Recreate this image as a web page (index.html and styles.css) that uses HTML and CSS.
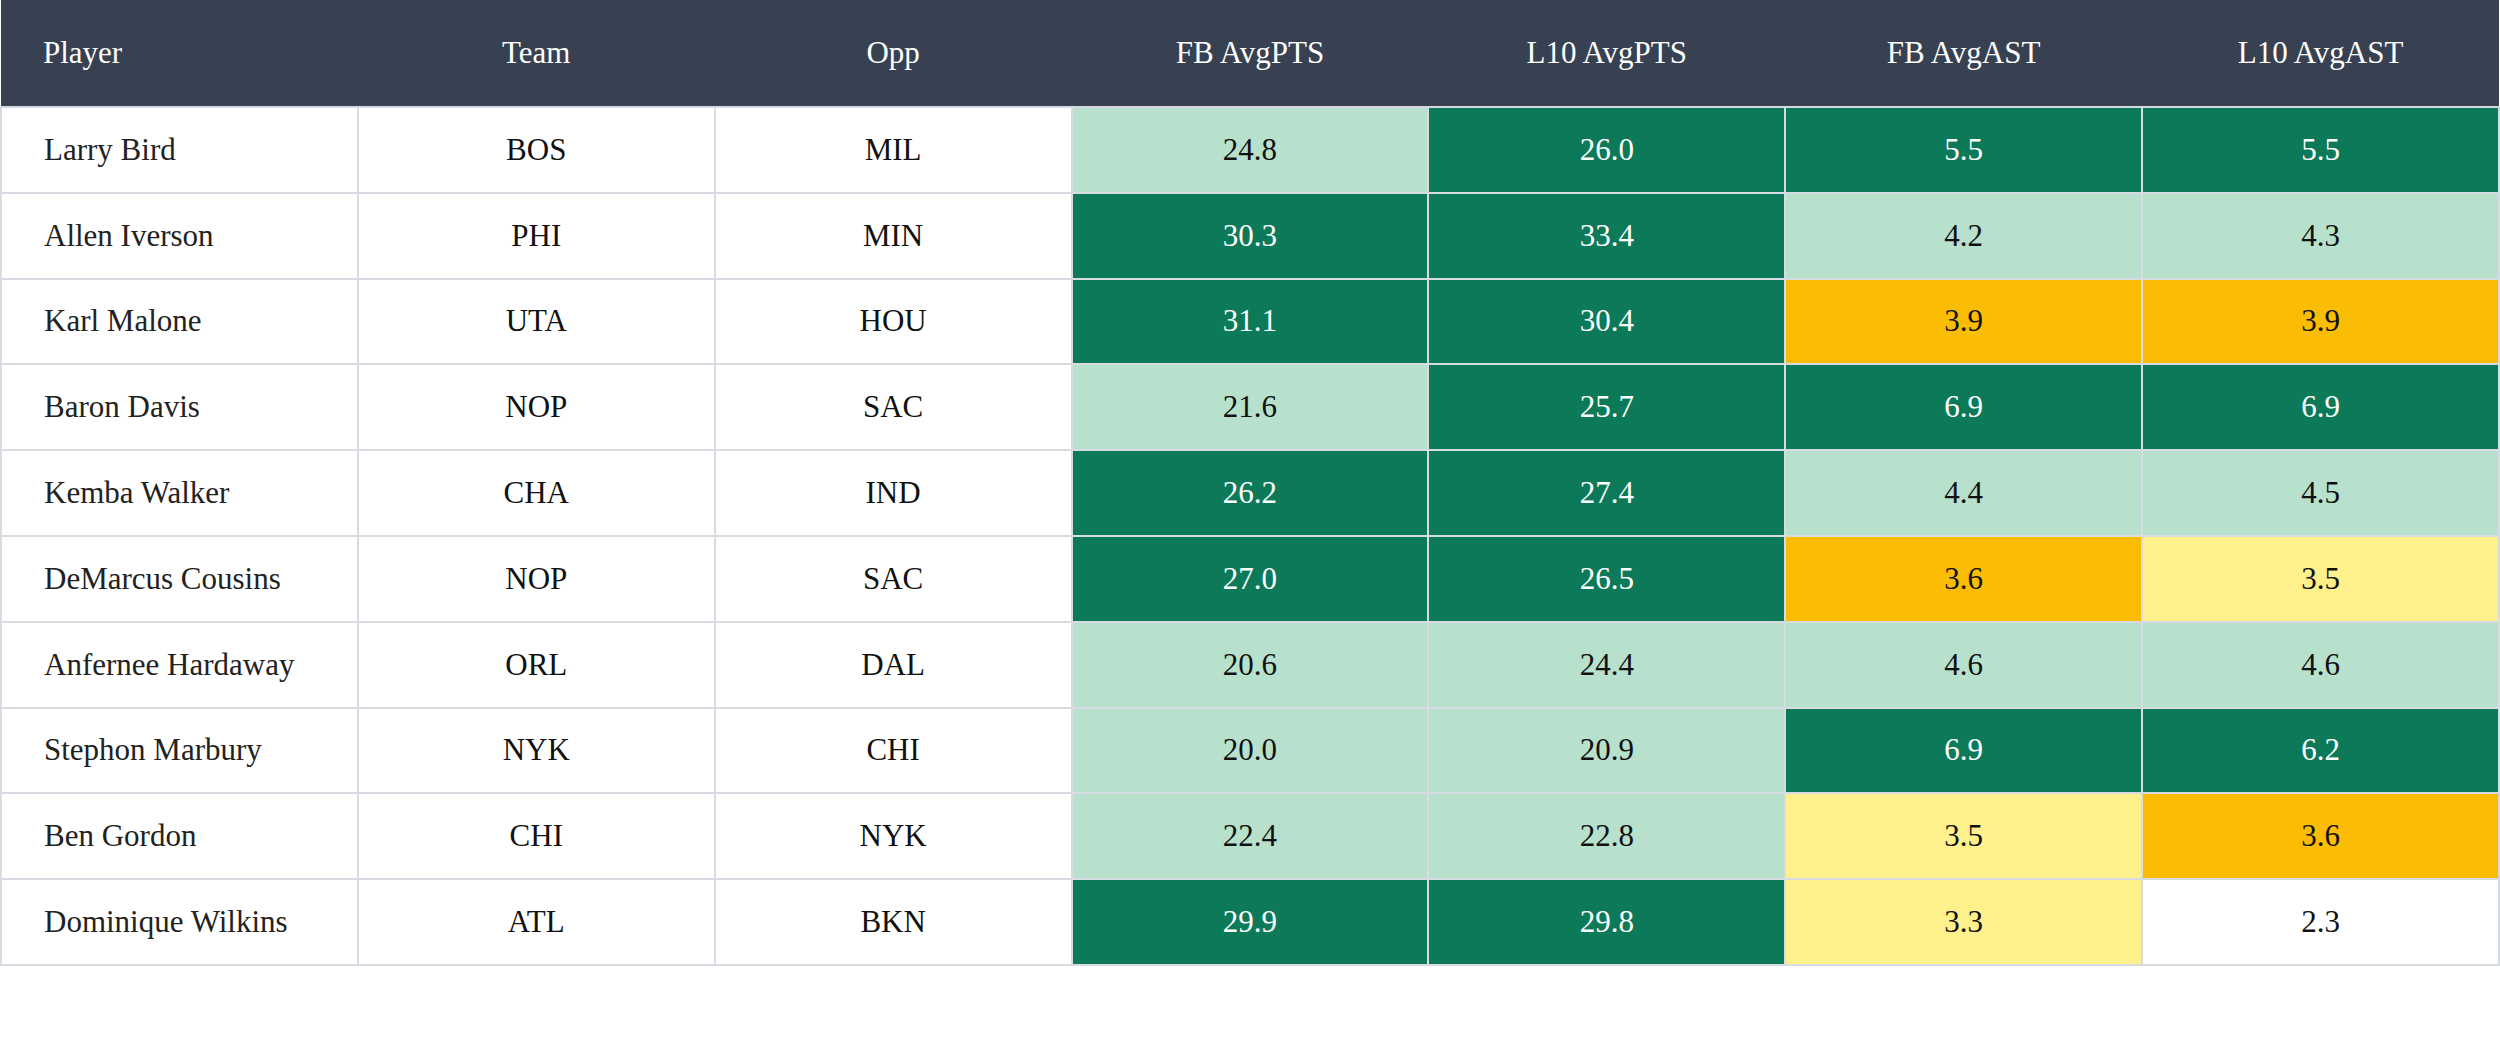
FILE: index.html
```html
<!DOCTYPE html>
<html>
<head>
<meta charset="utf-8">
<link rel="stylesheet" href="styles.css">
</head>
<body>
<table class="stats">
  <thead>
    <tr>
      <th class="left">Player</th>
      <th>Team</th>
      <th>Opp</th>
      <th>FB AvgPTS</th>
      <th>L10 AvgPTS</th>
      <th>FB AvgAST</th>
      <th>L10 AvgAST</th>
    </tr>
  </thead>
  <tbody>
    <tr><td class="left">Larry Bird</td><td>BOS</td><td>MIL</td><td class="lg">24.8</td><td class="g">26.0</td><td class="g">5.5</td><td class="g">5.5</td></tr>
    <tr><td class="left">Allen Iverson</td><td>PHI</td><td>MIN</td><td class="g">30.3</td><td class="g">33.4</td><td class="lg">4.2</td><td class="lg">4.3</td></tr>
    <tr><td class="left">Karl Malone</td><td>UTA</td><td>HOU</td><td class="g">31.1</td><td class="g">30.4</td><td class="y">3.9</td><td class="y">3.9</td></tr>
    <tr><td class="left">Baron Davis</td><td>NOP</td><td>SAC</td><td class="lg">21.6</td><td class="g">25.7</td><td class="g">6.9</td><td class="g">6.9</td></tr>
    <tr><td class="left">Kemba Walker</td><td>CHA</td><td>IND</td><td class="g">26.2</td><td class="g">27.4</td><td class="lg">4.4</td><td class="lg">4.5</td></tr>
    <tr><td class="left">DeMarcus Cousins</td><td>NOP</td><td>SAC</td><td class="g">27.0</td><td class="g">26.5</td><td class="y">3.6</td><td class="ly">3.5</td></tr>
    <tr><td class="left">Anfernee Hardaway</td><td>ORL</td><td>DAL</td><td class="lg">20.6</td><td class="lg">24.4</td><td class="lg">4.6</td><td class="lg">4.6</td></tr>
    <tr><td class="left">Stephon Marbury</td><td>NYK</td><td>CHI</td><td class="lg">20.0</td><td class="lg">20.9</td><td class="g">6.9</td><td class="g">6.2</td></tr>
    <tr><td class="left">Ben Gordon</td><td>CHI</td><td>NYK</td><td class="lg">22.4</td><td class="lg">22.8</td><td class="ly">3.5</td><td class="y">3.6</td></tr>
    <tr><td class="left">Dominique Wilkins</td><td>ATL</td><td>BKN</td><td class="g">29.9</td><td class="g">29.8</td><td class="ly">3.3</td><td>2.3</td></tr>
  </tbody>
</table>
</body>
</html>
```
FILE: styles.css
```css
html, body {
  margin: 0;
  padding: 0;
  background: #ffffff;
}

body {
  font-family: "Liberation Serif", "DejaVu Serif", serif;
}

.stats {
  width: 100%;
  table-layout: fixed;
  border-collapse: collapse;
}

.stats th {
  background: #374151;
  color: #ffffff;
  font-weight: normal;
  font-size: 31px;
  height: 106px;
  padding: 0 42px;
  text-align: center;
  vertical-align: middle;
  border-bottom: 2px solid #d5d9df;
}

.stats td {
  height: 83.8px;
  padding: 0 42px;
  font-size: 31px;
  color: #111111;
  text-align: center;
  vertical-align: middle;
  border: 2px solid #d8dce2;
}

.stats td.left {
  color: #222222;
}

.stats .left {
  text-align: left;
}

.stats td.g {
  background: #0c7a59;
  color: #ffffff;
}

.stats td.lg {
  background: #b7e1cd;
}

.stats td.y {
  background: #fbbc04;
}

.stats td.ly {
  background: #fef08a;
}
```
